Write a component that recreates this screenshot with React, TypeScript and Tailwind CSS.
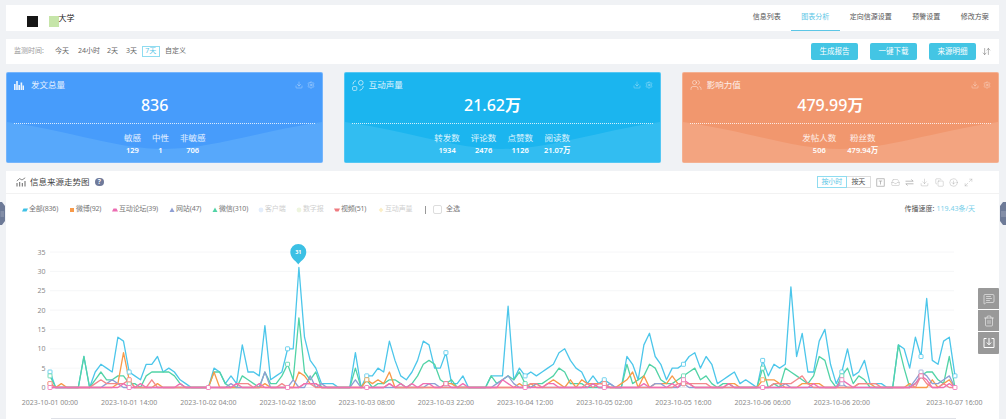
import type { ReactNode } from "react";
import { ArrowDownUp, Copy, Download, Maximize2, Inbox, MessageSquareText, Settings, Trash2, Users, CircleArrowDown } from "lucide-react";

const tabs = ["信息列表", "图表分析", "定向信源设置", "预警设置", "修改方案"];

const blue = [
  4, 0, 0, 0, 0, 0, 8, 0, 4, 6, 5, 4, 13, 12, 4, 3, 2, 6, 6, 8, 4, 5, 4, 2, 1, 0, 0, 0, 0, 5, 4, 1, 3, 1, 11, 4, 4, 3, 16, 2, 3,
  4, 10, 10, 31, 13, 7, 5, 1, 1, 1, 0, 0, 0, 9, 0, 3, 3, 5, 4, 12, 7, 3, 2, 4, 7, 12, 11, 5, 5, 9, 1, 1, 3, 0, 0, 0, 0, 3, 3, 3,
  21, 2, 5, 3, 4, 3, 4, 5, 6, 9, 10, 7, 5, 4, 1, 3, 1, 2, 1, 0, 0, 8, 6, 2, 11, 14, 8, 6, 2, 5, 5, 6, 8, 9, 5, 8, 6, 1, 2, 3,
  4, 1, 2, 1, 0, 7, 3, 6, 5, 6, 26, 8, 14, 4, 4, 12, 15, 6, 1, 4, 10, 3, 4, 7, 1, 1, 1, 0, 0, 11, 10, 5, 13, 8, 23, 7, 6, 12, 13, 3,
];

const sparse = (points: Record<number, number>) => Array.from({ length: 161 }, (_, h) => points[h] ?? 0);

const green = sparse({
  0: 3, 6: 8, 8: 2, 9: 4, 10: 2, 11: 2, 12: 3, 13: 3, 14: 1, 15: 1, 17: 3, 18: 4, 19: 4, 20: 4, 21: 4, 22: 3, 23: 1, 29: 4, 30: 4, 31: 1,
  34: 3, 35: 2, 36: 1, 38: 4, 39: 1, 40: 1, 41: 3, 42: 6, 43: 2, 44: 18, 45: 4, 46: 2, 47: 4, 54: 5, 56: 2, 58: 1, 59: 1, 60: 2, 61: 2, 62: 1,
  64: 1, 65: 3, 66: 6, 67: 7, 68: 6, 69: 2, 70: 1, 71: 2, 78: 3, 79: 1, 80: 2, 81: 3, 82: 2, 83: 4, 84: 1, 86: 1, 87: 1, 88: 2, 89: 3, 90: 5,
  91: 4, 92: 1, 93: 1, 94: 1, 102: 6, 103: 1, 104: 2, 105: 3, 106: 6, 107: 5, 108: 2, 109: 1, 110: 1, 111: 2, 112: 3, 113: 4, 114: 5, 115: 2,
  116: 3, 117: 1, 119: 1, 120: 1, 126: 5, 128: 1, 130: 5, 131: 4, 132: 3, 133: 2, 134: 1, 135: 3, 136: 8, 137: 7, 138: 2, 140: 3, 141: 5, 142: 1,
  143: 3, 144: 2, 150: 11, 151: 5, 153: 1, 154: 3, 155: 4, 156: 4, 157: 2, 158: 1, 159: 8,
});

const orange = sparse({
  0: 1, 2: 1, 12: 1, 13: 9, 14: 2, 19: 1, 29: 4, 38: 1, 44: 4, 45: 3, 46: 1, 47: 1, 56: 2, 57: 1, 58: 2, 59: 1, 60: 4, 70: 1, 71: 1,
  83: 1, 85: 1, 88: 1, 89: 2, 90: 1, 92: 2, 94: 2, 95: 1, 96: 1, 97: 1, 98: 1, 101: 1, 102: 2, 103: 4, 105: 3, 107: 1, 108: 1, 109: 1, 110: 3,
  111: 1, 112: 1, 113: 1, 120: 1, 121: 1, 126: 2, 127: 2, 128: 2, 129: 1, 133: 1, 134: 1, 135: 1, 136: 1, 143: 1, 144: 1, 145: 1, 152: 1, 156: 2, 158: 1, 159: 2,
});

const purple = sparse({
  10: 1, 11: 2, 12: 1, 32: 1, 38: 4, 43: 2, 46: 3, 48: 1, 54: 2, 67: 1, 68: 1, 79: 1, 80: 2, 81: 3, 82: 1, 86: 1, 96: 1, 99: 1, 107: 1, 108: 1,
  112: 1, 130: 1, 140: 1, 153: 2, 154: 4, 155: 3, 156: 1, 157: 1, 158: 2, 159: 3,
});

const red = sparse({
  0: 1, 8: 1, 9: 2, 10: 1, 11: 1, 12: 1, 13: 1, 14: 2, 18: 2, 33: 1, 34: 1, 35: 1, 41: 1, 45: 1, 46: 1, 60: 1, 85: 1, 86: 1, 95: 1, 97: 1, 98: 1,
  111: 1, 112: 1, 113: 1, 114: 1, 115: 1, 116: 1, 128: 1, 129: 1, 130: 1, 131: 1, 132: 2, 133: 3, 134: 1, 143: 1, 144: 1, 145: 1, 146: 1, 154: 3, 155: 1, 158: 1,
});

const pink = sparse({
  13: 1, 16: 1, 23: 1, 33: 1, 37: 1, 45: 1, 46: 1, 47: 1, 60: 1, 62: 1, 64: 1, 66: 1, 67: 1, 70: 1, 73: 1, 80: 2, 81: 1, 88: 1, 89: 1, 96: 1,
  105: 1, 110: 1, 112: 2, 113: 1, 120: 1, 135: 1, 140: 2, 141: 1, 153: 1, 154: 3, 155: 2, 159: 1,
});

const series = [
  { color: "#4cc6ea", data: blue },
  { color: "#52d3a6", data: green },
  { color: "#f89a4a", data: orange },
  { color: "#8f9fd4", data: purple },
  { color: "#f3888c", data: red },
  { color: "#f06fb2", data: pink },
];

const xOf = (h: number) => 50 + h * 5.656;
const yOf = (v: number) => 387.5 - v * 3.87;
const TOP = 225;
const ticks = Array.from({ length: 12 }, (_, i) => i * 14);
const dateLabels = [
  "2023-10-01 00:00", "2023-10-01 14:00", "2023-10-02 04:00", "2023-10-02 18:00", "2023-10-03 08:00", "2023-10-03 22:00",
  "2023-10-04 12:00", "2023-10-05 02:00", "2023-10-05 16:00", "2023-10-06 06:00", "2023-10-06 20:00",
];

function Wave({ color }: { color: string }) {
  return (
    <svg className="absolute left-0 bottom-0 w-full h-[40px]" viewBox="0 0 317 40" preserveAspectRatio="none">
      <path d="M0 0C70 10 110 27 158 27S250 10 317 0V40H0Z" fill={color} />
    </svg>
  );
}

function StatCard({ bg, wave, icon, title, total, unit, stats }: {
  bg: string;
  wave: string;
  icon: ReactNode;
  title: string;
  total: string;
  unit?: string;
  stats: { label: string; value: string }[];
}) {
  return (
    <div className={`relative flex-1 h-[91px] rounded-[2px] overflow-hidden text-white border border-white/25 ${bg}`}>
      <Wave color={wave} />
      <div className="relative flex flex-col h-full">
        <div className="flex items-center h-[24px] px-[7px]">
          <div className="w-[17px] flex items-center">{icon}</div>
          <span className="text-[8.5px] text-white/85">{title}</span>
          <div className="ml-auto flex items-center gap-[4px] text-white/65">
            <Download size={8} strokeWidth={1.3} />
            <Settings size={8} strokeWidth={1.3} />
          </div>
        </div>
        <div className="h-[16px] pr-[20px] flex items-center justify-center text-[16px] leading-none font-medium">
          {total}
          {unit && <span className="font-bold">{unit}</span>}
        </div>
        <div className="mx-[7px] mt-[10px] border-t border-dotted border-white/80" />
        <div className="flex justify-center gap-[11px] pt-[8px]">
          {stats.map((s) => (
            <div key={s.label} className="flex flex-col items-center whitespace-nowrap">
              <span className="text-[8.5px] leading-[11px] text-white/85">{s.label}</span>
              <span className="text-[7.5px] leading-[11px] mt-[2px] font-semibold">{s.value}</span>
            </div>
          ))}
        </div>
      </div>
    </div>
  );
}

function Legend({ shape, color, text, off, width }: { shape: string; color: string; text: string; off?: boolean; width: string }) {
  return (
    <div className={`flex items-center gap-[1px] text-[7px] tracking-[-0.15px] shrink-0 ${width} ${off ? "text-[#cfcfcf]" : "text-[#777]"}`}>
      <svg width="6" height="6" viewBox="0 0 6 6">
        {shape === "para" && <polygon points="1.5,1.5 6,1.5 4.5,4.5 0,4.5" fill={color} />}
        {shape === "square" && <rect x="1" y="1" width="4" height="4" fill={color} />}
        {shape === "trap" && <polygon points="1.5,1.5 4.5,1.5 6,4.5 0,4.5" fill={color} />}
        {shape === "tri" && <polygon points="3,0.5 5.5,5 0.5,5" fill={color} />}
        {shape === "dot" && <circle cx="3" cy="3" r="2.4" fill={color} />}
        {shape === "cup" && <polygon points="0,1.5 6,1.5 4.5,4.5 1.5,4.5" fill={color} />}
        {shape === "diamond" && <polygon points="3,0.5 5.3,3 3,5.5 0.7,3" fill={color} />}
      </svg>
      <span className="whitespace-nowrap">{text}</span>
    </div>
  );
}

function TrendChart() {
  return (
    <svg width="1006" height="194" viewBox={`0 ${TOP} 1006 194`} className="block -ml-[6px] shrink-0">
      {[0, 5, 10, 15, 20, 25, 30, 35].map((v) => (
        <g key={v}>
          <line x1="50" x2="954" y1={yOf(v)} y2={yOf(v)} stroke={v === 0 ? "#e4e6ea" : "#f3f4f5"} strokeWidth="0.8" />
          <text x="45.5" y={yOf(v) + 2.5} textAnchor="end" fontSize="7" fill="#8b8b8b">{v}</text>
        </g>
      ))}
      {dateLabels.map((d, i) => (
        <text key={d} x={xOf(i * 14)} y="404.5" textAnchor="middle" fontSize="7" fill="#8b8b8b">{d}</text>
      ))}
      <text x="954.5" y="404.5" textAnchor="middle" fontSize="7" fill="#8b8b8b">2023-10-07 16:00</text>
      {series.map((s) => (
        <polyline
          key={s.color}
          points={s.data.map((v, h) => `${xOf(h).toFixed(1)},${yOf(v).toFixed(1)}`).join(" ")}
          fill="none"
          stroke={s.color}
          strokeWidth="1.3"
          strokeLinejoin="round"
        />
      ))}
      {series.map((s) =>
        [...ticks, 160].map((h) => (
          <rect
            key={`${s.color}-${h}`}
            x={xOf(h) - 2}
            y={yOf(s.data[h]) - 2}
            width="4"
            height="4"
            rx="0.6"
            fill="#fff"
            stroke={s.color}
            strokeWidth="0.8"
            opacity={s.data[h] === 0 && s.color !== "#f06fb2" ? 0 : 1}
          />
        )),
      )}
      <path d="M298.3 264.5C296.8 261.5 290.3 258.5 290.3 252A8 8 0 0 1 306.3 252C306.3 258.5 299.8 261.5 298.3 264.5Z" fill="#3cc0e4" />
      <text x="298.3" y="254.2" textAnchor="middle" fontSize="5.5" fontWeight="700" fill="#fff">31</text>
      <line x1="51" x2="956" y1="418.5" y2="418.5" stroke="#dfe1e7" strokeWidth="1" />
    </svg>
  );
}

export default function App() {
  return (
    <div className="relative w-[1006px] h-[419px] overflow-hidden bg-[#f0f2f5] pl-[6px] pr-[7px] pt-[5px] flex flex-col font-[family-name:'Noto_Sans','Noto_Sans_CJK_SC',sans-serif]">
      <div className="h-[26px] bg-white flex items-stretch shrink-0">
        <div className="flex items-start pl-[21px] pt-[11px]">
          <div className="w-[11px] h-[11px] bg-[#161616]" />
          <div className="w-[10px] h-[11px] bg-[#c6e5a9] ml-[10.5px]" />
          <span className="text-[8px] leading-[10px] -mt-[3px] text-[#222]">大学</span>
        </div>
        <div className="ml-auto flex items-stretch">
          {tabs.map((t) => (
            <div
              key={t}
              className={`flex items-center px-[10.25px] text-[7px] border-b ${t === "图表分析" ? "text-[#5cc6e6] border-[#5cc6e6]" : "text-[#555] border-transparent"}`}
            >
              {t}
            </div>
          ))}
        </div>
      </div>

      <div className="h-[25px] mt-[8px] bg-white flex items-center pl-[8px] pr-[8px] shrink-0 text-[7px] text-[#666]">
        <span className="text-[#9a9a9a] w-[41px]">监测时间:</span>
        <span className="w-[23px]">今天</span>
        <span className="w-[29px]">24小时</span>
        <span className="w-[19px]">2天</span>
        <span className="w-[15.5px]">3天</span>
        <span className="w-[18.5px] h-[11px] border border-[#8fdcf0] text-[#5cc6e6] flex items-center justify-center mr-[5px]">7天</span>
        <span>自定义</span>
        <div className="ml-auto flex items-center gap-[12px]">
          {["生成报告", "一键下载", "来源明细"].map((b) => (
            <div key={b} className="w-[47px] h-[17px] rounded-[2px] bg-[#43c5e4] text-white text-[7.5px] flex items-center justify-center">{b}</div>
          ))}
          <ArrowDownUp size={9} strokeWidth={1.2} className="text-[#555] -ml-[6px]" />
        </div>
      </div>

      <div className="flex gap-[20.5px] mt-[8px] shrink-0">
        <StatCard
          bg="bg-[#479cfb]"
          wave="#57a8fb"
          title="发文总量"
          total="836"
          icon={
            <svg width="10" height="9" viewBox="0 0 10 9" fill="#fff" opacity="0.9">
              <rect x="0" y="3" width="1.6" height="6" />
              <rect x="2.2" y="0" width="1.6" height="9" />
              <rect x="4.4" y="4" width="1.6" height="5" />
              <rect x="6.6" y="1.5" width="1.6" height="7.5" />
              <rect x="8.6" y="4.5" width="1.4" height="4.5" />
            </svg>
          }
          stats={[
            { label: "敏感", value: "129" },
            { label: "中性", value: "1" },
            { label: "非敏感", value: "706" },
          ]}
        />
        <StatCard
          bg="bg-[#1bb5ef]"
          wave="#32bdf1"
          title="互动声量"
          total="21.62"
          unit="万"
          icon={
            <svg width="12" height="11" viewBox="0 0 12 11" fill="none" stroke="#fff" strokeWidth="0.7" opacity="0.9">
              <path d="M1 4.5C1 2.5 2 1 4 .8" />
              <circle cx="8.8" cy="2.8" r="2.3" />
              <rect x=".6" y="6.6" width="4.2" height="3.8" rx="1" />
              <path d="M11.2 6C11.2 8 10 10 7.5 10.3" />
            </svg>
          }
          stats={[
            { label: "转发数", value: "1934" },
            { label: "评论数", value: "2476" },
            { label: "点赞数", value: "1126" },
            { label: "阅读数", value: "21.07万" },
          ]}
        />
        <StatCard
          bg="bg-[#f1976e]"
          wave="#f3a480"
          title="影响力值"
          total="479.99"
          unit="万"
          icon={<Users size={12} strokeWidth={1} className="opacity-90" />}
          stats={[
            { label: "发帖人数", value: "506" },
            { label: "粉丝数", value: "479.94万" },
          ]}
        />
      </div>

      <div className="mt-[8px] bg-white flex-1 min-h-0 flex flex-col">
        <div className="h-[23px] shrink-0 border-b border-[#f2f2f2] flex items-center pl-[10px] pr-[26px]">
          <svg width="10" height="10" viewBox="0 0 10 10" fill="none" stroke="#555" strokeWidth="0.9">
            <path d="M1 9.5V6M3.7 9.5V5M6.3 9.5V6M9 9.5V4" />
            <path d="M.8 4 3.6 1.6 6 3 9.2.8" strokeWidth="0.7" />
          </svg>
          <span className="ml-[4px] text-[8.5px] text-[#444]">信息来源走势图</span>
          <span className="ml-[5.5px] w-[8.5px] h-[8.5px] rounded-full bg-[#6f7a9a] text-white text-[6.5px] font-bold flex items-center justify-center">?</span>
          <div className="ml-auto flex items-center text-[#a0a0a0]">
            <span className="w-[30px] h-[12px] border border-[#8fdcf0] text-[#5cc6e6] text-[7px] flex items-center justify-center">按小时</span>
            <span className="w-[24px] h-[12px] border border-l-0 border-[#ddd] text-[#555] text-[7px] flex items-center justify-center mr-[5px]">按天</span>
            <div className="flex items-center gap-[5.7px]">
              <svg width="9" height="9" viewBox="0 0 9 9" fill="none" stroke="currentColor" strokeWidth="0.7">
                <rect x=".8" y=".8" width="7.4" height="7.4" />
                <path d="M2.8 3H6.2M4.5 3V6.5" />
              </svg>
              <Inbox size={9} strokeWidth={1} />
              <svg width="9" height="9" viewBox="0 0 9 9" fill="none" stroke="currentColor" strokeWidth="0.7">
                <path d="M.5 3.2H8.2L6.3 1.5M8.5 5.8H.8L2.7 7.5" />
              </svg>
              <Download size={9} strokeWidth={1} />
              <Copy size={9} strokeWidth={1} />
              <CircleArrowDown size={9} strokeWidth={1} />
              <Maximize2 size={9} strokeWidth={1} />
            </div>
          </div>
        </div>
        <div className="h-[31px] shrink-0 flex items-center pl-[16px] pr-[24px]">
          <Legend width="w-[47px]" shape="para" color="#3fc1e6" text="全部(836)" />
          <Legend width="w-[43px]" shape="square" color="#f89a4a" text="微博(92)" />
          <Legend width="w-[57px]" shape="trap" color="#ec6cb2" text="互动论坛(39)" />
          <Legend width="w-[43px]" shape="tri" color="#8f9fd4" text="网站(47)" />
          <Legend width="w-[46px]" shape="tri" color="#52d3a6" text="微信(310)" />
          <Legend width="w-[38px]" shape="dot" color="#e3edfb" text="客户端" off />
          <Legend width="w-[38px]" shape="dot" color="#eef5df" text="数字报" off />
          <Legend width="w-[44px]" shape="cup" color="#ef7b80" text="视频(51)" />
          <Legend width="w-[47px]" shape="diamond" color="#fbeec6" text="互动声量" off />
          <div className="w-px h-[8px] bg-[#999]" />
          <div className="flex items-center gap-[4px] ml-[7px]">
            <div className="w-[9px] h-[9px] rounded-[2px] border border-[#ddd]" />
            <span className="text-[7px] text-[#777]">全选</span>
          </div>
          <div className="ml-auto text-[7px] text-[#555]">
            传播速度:<span className="text-[#7bd0ea] ml-[2px]">119.43条/天</span>
          </div>
        </div>
        <TrendChart />
      </div>

      <svg className="absolute left-0 top-[202px]" width="5" height="23" viewBox="0 0 5 23">
        <polygon points="0,0 2,0 5,4 5,19 2,23 0,23" fill="#6d7a97" />
        <path d="M.5 10H4M.5 12H4M.5 14H4" stroke="#c7ccd8" strokeWidth="0.5" />
      </svg>
      <svg className="absolute right-0 top-[202px]" width="6" height="23" viewBox="0 0 6 23">
        <polygon points="6,0 3,0 0,4 0,19 3,23 6,23" fill="#6d7a97" />
        <path d="M1 10H6M1 12H6M1 14H6" stroke="#c7ccd8" strokeWidth="0.5" />
      </svg>

      <div className="absolute left-[978px] top-[288px] w-[21px] flex flex-col gap-px">
        <div className="h-[21px] bg-[#999] rounded-t-[1px] flex items-center justify-center text-white"><MessageSquareText size={12} strokeWidth={1.1} /></div>
        <div className="h-[21px] bg-[#999] flex items-center justify-center text-white"><Trash2 size={12} strokeWidth={1.1} /></div>
        <div className="h-[22px] bg-[#999] rounded-b-[1px] flex items-center justify-center text-white">
          <svg width="12" height="12" viewBox="0 0 12 12" fill="none" stroke="#fff" strokeWidth="1">
            <path d="M3.5 1.5H1V10.5H11V1.5H8.5M6 1V7.5M3.8 5.5 6 7.8 8.2 5.5" />
          </svg>
        </div>
      </div>
    </div>
  );
}
